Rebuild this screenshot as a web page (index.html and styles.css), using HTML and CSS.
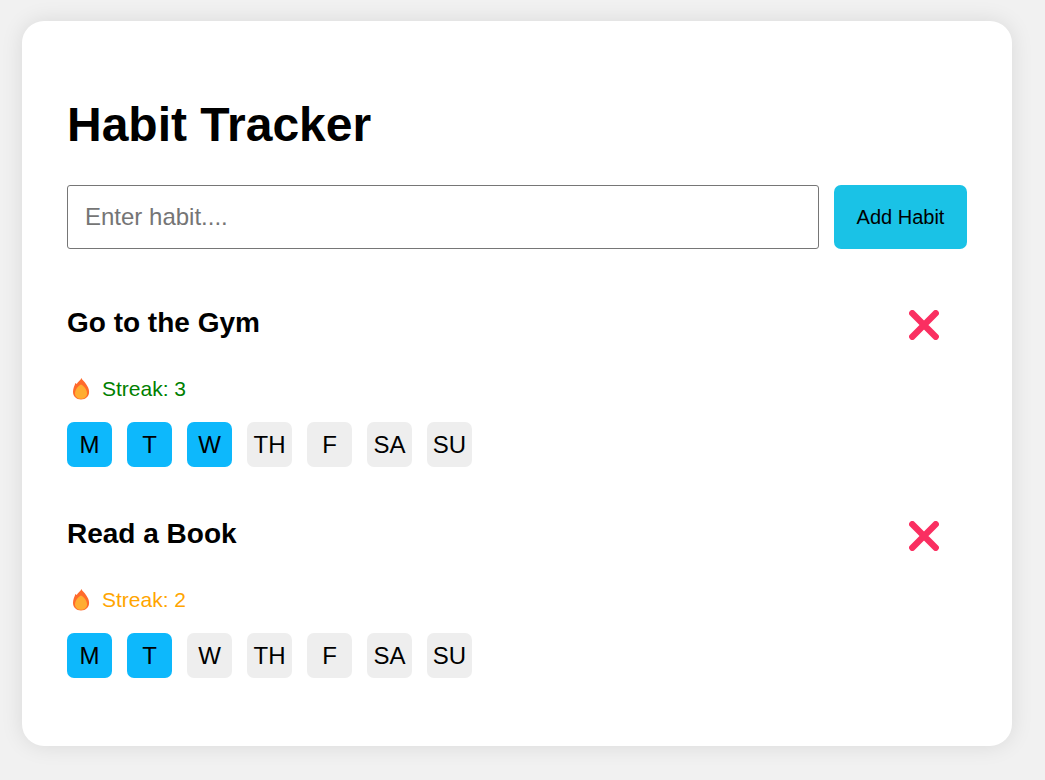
FILE: index.html
```html
<!DOCTYPE html>
<html lang="en">
<head>
<meta charset="utf-8">
<meta name="viewport" content="width=device-width, initial-scale=1">
<title>Habit Tracker</title>
<link rel="stylesheet" href="styles.css">
</head>
<body>
<svg class="sprite" aria-hidden="true">
  <symbol id="flame" viewBox="0 0 18 22">
    <path fill="#ff6a2b" d="M9.4 0C10 2.2 12.6 3.4 14 6C15.8 8.6 17.1 10.8 17.1 13.8C17.1 18.5 13.7 21.5 9 21.5C4.3 21.5 1 18.5 1 13.8C1 10.4 2.4 8.1 3.4 5L4.7 6.1C5.7 3.9 8.6 2.4 9.4 0Z"/>
    <path fill="#ffad32" d="M9 6.4C11.4 7.6 15 11.2 15 15.2C15 18.8 12.5 20.7 9 20.7C5.5 20.7 3 18.8 3 15.2C3 11.2 6.6 7.6 9 6.4Z"/>
  </symbol>
  <symbol id="cross" viewBox="0 0 30 30">
    <path fill="none" stroke="#fa2f61" stroke-width="6.4" stroke-linecap="round" d="M3.3 3.3L26.7 26.7M26.7 3.3L3.3 26.7"/>
  </symbol>
</svg>
<main class="card">
  <h1 class="title">Habit Tracker</h1>
  <form class="add-form">
    <input class="habit-input" type="text" placeholder="Enter habit...." aria-label="Habit">
    <button class="add-button" type="button">Add Habit</button>
  </form>
  <section class="habit">
    <header class="habit-header">
      <h2 class="habit-name">Go to the Gym</h2>
      <button class="delete-button" type="button" aria-label="Delete Go to the Gym"><svg class="cross"><use href="#cross"/></svg></button>
    </header>
    <p class="streak streak-high"><svg class="flame" aria-hidden="true"><use href="#flame"/></svg><span>Streak: 3</span></p>
    <div class="days">
      <button class="day done" type="button">M</button>
      <button class="day done" type="button">T</button>
      <button class="day done" type="button">W</button>
      <button class="day" type="button">TH</button>
      <button class="day" type="button">F</button>
      <button class="day" type="button">SA</button>
      <button class="day" type="button">SU</button>
    </div>
  </section>
  <section class="habit">
    <header class="habit-header">
      <h2 class="habit-name">Read a Book</h2>
      <button class="delete-button" type="button" aria-label="Delete Read a Book"><svg class="cross"><use href="#cross"/></svg></button>
    </header>
    <p class="streak streak-low"><svg class="flame" aria-hidden="true"><use href="#flame"/></svg><span>Streak: 2</span></p>
    <div class="days">
      <button class="day done" type="button">M</button>
      <button class="day done" type="button">T</button>
      <button class="day" type="button">W</button>
      <button class="day" type="button">TH</button>
      <button class="day" type="button">F</button>
      <button class="day" type="button">SA</button>
      <button class="day" type="button">SU</button>
    </div>
  </section>
</main>
</body>
</html>
```
FILE: styles.css
```css
* {
  box-sizing: border-box;
}

body {
  margin: 0;
  padding: 21px 33px 21px 22px;
  background: #f1f1f1;
  color: #000;
  font-family: "Liberation Sans", Arial, sans-serif;
}

button,
input {
  font-family: inherit;
  color: inherit;
}

button {
  border: 0;
  cursor: pointer;
}

.sprite {
  display: none;
}

.card {
  padding: 77px 45px 45px;
  border-radius: 22px;
  background: #fff;
  box-shadow: 0 0 22px rgba(0, 0, 0, 0.1);
}

.title {
  margin: 0 0 33px;
  font-size: 48px;
  line-height: 54px;
}

.add-form {
  display: flex;
  gap: 15px;
  margin-bottom: 58px;
}

.habit-input {
  flex: 1;
  min-width: 0;
  height: 64px;
  padding: 0 17px;
  border: 1px solid #767676;
  border-radius: 3px;
  background: #fff;
  font-size: 24px;
}

.habit-input::placeholder {
  color: #757575;
}

.add-button {
  min-width: 133px;
  padding: 0 22px;
  border-radius: 7px;
  background: #1ac2e6;
  font-size: 20px;
}

.habit {
  padding-bottom: 23px;
}

.habit + .habit {
  margin-top: 28px;
}

.habit-header {
  display: flex;
  align-items: flex-start;
  justify-content: space-between;
  margin-bottom: 35px;
}

.habit-name {
  margin: 0;
  font-size: 28px;
  line-height: 32px;
}

.delete-button {
  display: block;
  padding: 3px 28px 2px;
  background: none;
}

.cross {
  display: block;
  width: 30px;
  height: 30px;
}

.streak {
  display: flex;
  align-items: center;
  gap: 12px;
  margin: 0 0 21px;
  padding-left: 5px;
  font-size: 21px;
  line-height: 24px;
}

.flame {
  width: 18px;
  height: 22px;
}

.streak-high {
  color: green;
}

.streak-low {
  color: orange;
}

.days {
  display: flex;
  gap: 15px;
}

.day {
  width: 45px;
  height: 45px;
  padding: 0;
  border-radius: 7px;
  background: #eee;
  font-size: 24px;
}

.done {
  background: #0db8fc;
}
```
